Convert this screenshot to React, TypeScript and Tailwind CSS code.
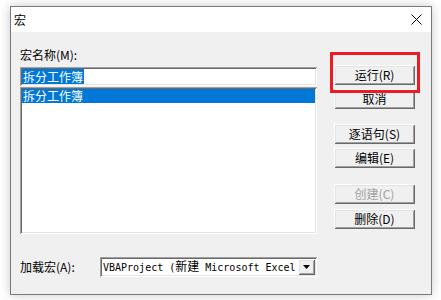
const raised =
  "shadow-[inset_1px_1px_#ffffff,inset_-1px_-1px_#696969,inset_2px_2px_#e3e3e3,inset_-2px_-2px_#a0a0a0]";
const sunken =
  "shadow-[inset_1px_1px_#a0a0a0,inset_-1px_-1px_#ffffff,inset_2px_2px_#696969,inset_-2px_-2px_#e3e3e3]";

const font = { fontFamily: '"Noto Sans CJK SC", "Noto Sans", sans-serif' };

function Btn({
  label,
  disabled,
  className = "",
}: {
  label: string;
  disabled?: boolean;
  className?: string;
}) {
  return (
    <div
      className={`flex h-[20px] w-[81px] items-center justify-center bg-[#f0f0f0] text-[12px] leading-[20px] ${raised} ${
        disabled ? "text-[#a0a0a0]" : "text-black"
      } ${className}`}
    >
      {label}
    </div>
  );
}

export default function App() {
  return (
    <div
      className="relative h-[300px] w-[441px] overflow-hidden bg-white pl-[10px] pt-[6px]"
      style={font}
    >
      <div className="flex h-[289px] w-[422px] flex-col border border-[#7a7a7a] shadow-[0_0_10px_rgba(0,0,0,0.22)]">
        {/* title bar */}
        <div className="flex h-[25px] items-center justify-between bg-white pl-[3px] pr-[9px] text-[12px] text-black">
          <span className="leading-[16px]">宏</span>
          <svg width="11" height="11" viewBox="0 0 11 11">
            <path d="M0.5 0.5 L10.5 10.5 M10.5 0.5 L0.5 10.5" stroke="#000" strokeWidth="1" />
          </svg>
        </div>

        {/* body */}
        <div className="flex flex-1 bg-[#f0f0f0] text-[12px] text-black">
          <div className="ml-[9px] flex w-[297px] flex-col pt-[15px]">
            <div className="h-[16px] leading-[16px]">宏名称(M):</div>

            <div className={`mt-[4px] flex h-[19px] items-center bg-white px-[2px] ${sunken}`}>
              <span className="bg-[#0078d7] px-[1px] leading-[15px] text-white">拆分工作簿</span>
            </div>

            <div className={`mt-[1px] h-[147px] bg-white p-[2px] ${sunken}`}>
              <div className="h-[14px] bg-[#0078d7] pl-[1px] leading-[14px] text-white">
                拆分工作簿
              </div>
            </div>

            <div className="mt-[23px] flex items-center">
              <span className="w-[80px] leading-[16px]">加载宏(A):</span>
              <div className={`flex h-[20px] w-[217px] items-center bg-white p-[2px] ${sunken}`}>
                <div
                  className="flex-1 overflow-hidden whitespace-nowrap pl-[1px] text-[10px] leading-[16px]"
                  style={{ fontFamily: '"DejaVu Sans Mono", "Liberation Mono", monospace' }}
                >
                  VBAProject (<span className="text-[12px]" style={font}>新建</span> Microsoft Excel
                </div>
                <div className={`flex h-[16px] w-[17px] items-center justify-center bg-[#f0f0f0] ${raised}`}>
                  <svg width="7" height="4" viewBox="0 0 7 4">
                    <path d="M0 0 H7 L3.5 4 Z" fill="#000" />
                  </svg>
                </div>
              </div>
            </div>
          </div>

          <div className="ml-[17px] flex w-[81px] flex-col pt-[33px]">
            <Btn label="运行(R)" />
            <Btn label="取消" className="mt-[4px]" />
            <Btn label="逐语句(S)" className="mt-[15px]" />
            <Btn label="编辑(E)" className="mt-[4px]" />
            <Btn label="创建(C)" disabled className="mt-[16px]" />
            <Btn label="删除(D)" className="mt-[5px]" />
          </div>
        </div>
      </div>

      {/* red highlight box around the run button */}
      <div className="absolute left-[330px] top-[52px] h-[41px] w-[90px] border-[3px] border-[#ed1c24]" />
    </div>
  );
}
